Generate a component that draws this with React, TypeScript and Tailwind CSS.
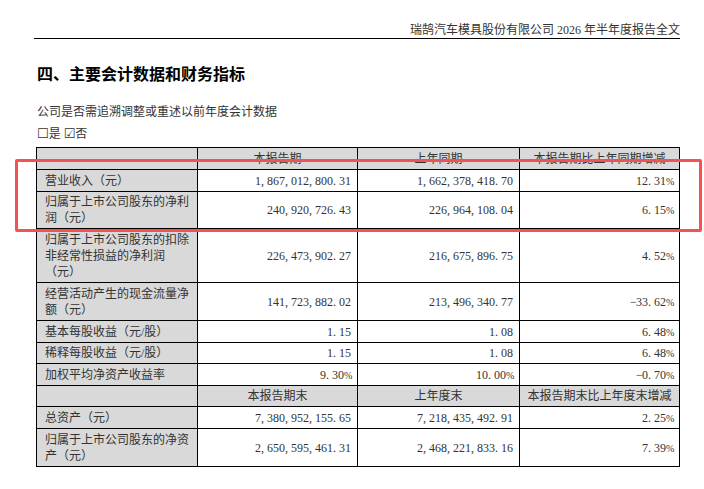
const FONT = "font-['Liberation_Serif','Noto_Sans_CJK_SC',serif]";

function Num({ v }: { v: string }) {
  return (
    <span className="whitespace-nowrap">
      {v.split('').map((c, i) => {
        if (c === ',' || c === '.') {
          return (
            <span key={i} className="inline-block w-[6px] text-left">
              {c}
            </span>
          );
        }
        if (c === '-') {
          return (
            <span key={i} className="inline-block w-[6px] text-center">
              −
            </span>
          );
        }
        if (c === '%') {
          return (
            <span key={i} className="inline-block w-[7px] text-center text-[10px] tracking-[-1px]">
              %
            </span>
          );
        }
        return <span key={i}>{c}</span>;
      })}
    </span>
  );
}

type Row = { label: string[]; a: string; b: string; c: string; h: string };

const TOP_ROWS: Row[] = [
  { label: ['营业收入（元）'], a: '1,867,012,800.31', b: '1,662,378,418.70', c: '12.31%', h: 'h-[22px]' },
  { label: ['归属于上市公司股东的净利', '润（元）'], a: '240,920,726.43', b: '226,964,108.04', c: '6.15%', h: 'h-[37px]' },
  {
    label: ['归属于上市公司股东的扣除', '非经常性损益的净利润', '（元）'],
    a: '226,473,902.27',
    b: '216,675,896.75',
    c: '4.52%',
    h: 'h-[54px]',
  },
  { label: ['经营活动产生的现金流量净', '额（元）'], a: '141,723,882.02', b: '213,496,340.77', c: '-33.62%', h: 'h-[38px]' },
  { label: ['基本每股收益（元/股）'], a: '1.15', b: '1.08', c: '6.48%', h: 'h-[22px]' },
  { label: ['稀释每股收益（元/股）'], a: '1.15', b: '1.08', c: '6.48%', h: 'h-[21px]' },
  { label: ['加权平均净资产收益率'], a: '9.30%', b: '10.00%', c: '-0.70%', h: 'h-[22px]' },
];

const BOTTOM_ROWS: Row[] = [
  { label: ['总资产（元）'], a: '7,380,952,155.65', b: '7,218,435,492.91', c: '2.25%', h: 'h-[22px]' },
  { label: ['归属于上市公司股东的净资', '产（元）'], a: '2,650,595,461.31', b: '2,468,221,833.16', c: '7.39%', h: 'h-[38px]' },
];

function DataRow({ row }: { row: Row }) {
  return (
    <tr className={row.h}>
      <td className="border border-black bg-[#d9d9d9] pl-[8px] pr-1 text-left align-middle leading-[16px]">
        {row.label.map((l, i) => (
          <div key={i}>{l}</div>
        ))}
      </td>
      <td className="border border-black pr-[6px] text-right align-middle">
        <Num v={row.a} />
      </td>
      <td className="border border-black pr-[6px] text-right align-middle">
        <Num v={row.b} />
      </td>
      <td className="border border-black pr-[6px] text-right align-middle">
        <Num v={row.c} />
      </td>
    </tr>
  );
}

function HeadRow({ cols, h }: { cols: string[]; h: string }) {
  return (
    <tr className={`${h} bg-[#d9d9d9]`}>
      <td className="border border-black" />
      {cols.map(c => (
        <td key={c} className="border border-black text-center align-middle leading-[16px]">
          {c}
        </td>
      ))}
    </tr>
  );
}

export default function App() {
  return (
    <div className={`relative w-[704px] h-[489px] overflow-hidden bg-white text-[#222] ${FONT}`}>
      {/* Running header */}
      <div className="ml-[34px] w-[646px] pt-[22px] border-b border-black text-right text-[12px] leading-[16px] text-[#333]">
        瑞鹄汽车模具股份有限公司 2026 年半年度报告全文
      </div>

      <h2 className="ml-[37px] mt-[22px] text-[16px] leading-[24px] font-bold font-['Noto_Sans_CJK_SC',sans-serif] text-black">
        四、主要会计数据和财务指标
      </h2>

      <p className="ml-[37px] mt-[19px] text-[12px] leading-[16px] text-[#333]">公司是否需追溯调整或重述以前年度会计数据</p>
      <p className="ml-[37px] mt-[6px] text-[12px] leading-[16px] text-[#333]">
        <span className="font-['DejaVu_Sans',sans-serif] text-[13px]">☐</span>是{' '}
        <span className="font-['DejaVu_Sans',sans-serif] text-[13px]">☑</span>否
      </p>

      <table className="ml-[36px] mt-[5px] w-[643px] table-fixed border-collapse text-[12px] text-[#333]">
        <colgroup>
          <col className="w-[161px]" />
          <col className="w-[160px]" />
          <col className="w-[162px]" />
          <col className="w-[160px]" />
        </colgroup>
        <tbody>
          <HeadRow cols={['本报告期', '上年同期', '本报告期比上年同期增减']} h="h-[22px]" />
          {TOP_ROWS.map(r => (
            <DataRow key={r.label.join('')} row={r} />
          ))}
          <HeadRow cols={['本报告期末', '上年度末', '本报告期末比上年度末增减']} h="h-[21px]" />
          {BOTTOM_ROWS.map(r => (
            <DataRow key={r.label.join('')} row={r} />
          ))}
        </tbody>
      </table>

      {/* Highlight box drawn over the table */}
      <div className="absolute left-[15px] top-[159px] w-[687px] h-[73px] border-[3px] border-[#f25252] rounded-[2px] pointer-events-none" />
    </div>
  );
}
